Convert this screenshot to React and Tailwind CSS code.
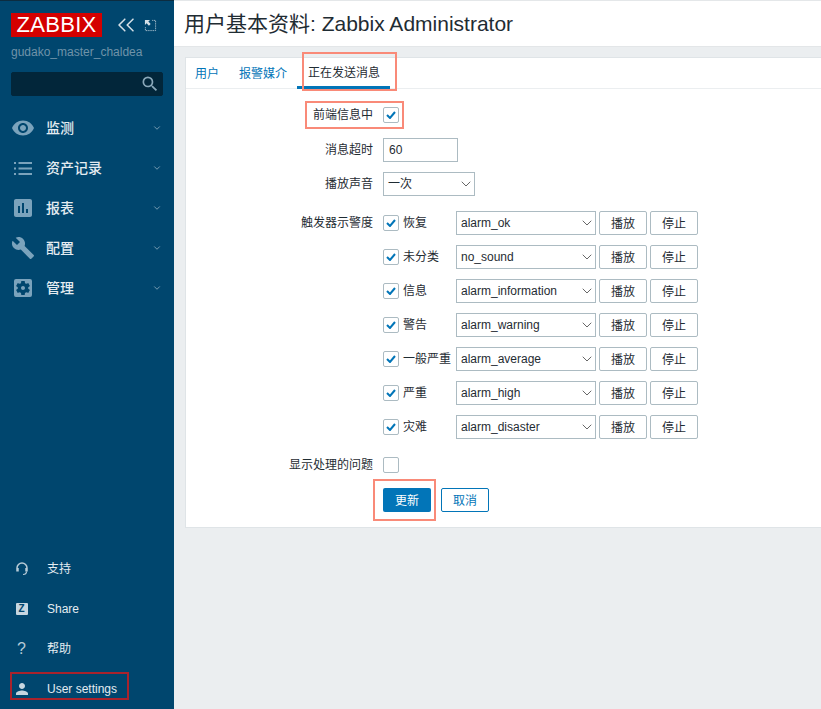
import React from "react";
import { ChevronDown, ChevronsLeft } from "lucide-react";
import {
  MdRemoveRedEye,
  MdAssessment,
  MdBuild,
  MdSettingsApplications,
  MdSearch,
  MdPerson,
} from "react-icons/md";

const FONT = { fontFamily: '"Liberation Sans", "Noto Sans CJK SC", sans-serif' };

const ListIcon = ({ size }) => (
  <svg width={size} height={size} viewBox="0 0 24 24" fill="currentColor">
    <path d="M3 6h2v2H3zM3 11.500h2v2H3zM3 17h2v2H3zM7.500 6H21v2H7.500zM7.500 11.500H21v2H7.500zM7.500 17H21v2H7.500z" />
  </svg>
);

const menu = [
  { label: "监测", Icon: MdRemoveRedEye },
  { label: "资产记录", Icon: ListIcon },
  { label: "报表", Icon: MdAssessment },
  { label: "配置", Icon: MdBuild },
  { label: "管理", Icon: MdSettingsApplications },
];

const severities = [
  { label: "恢复", sound: "alarm_ok" },
  { label: "未分类", sound: "no_sound" },
  { label: "信息", sound: "alarm_information" },
  { label: "警告", sound: "alarm_warning" },
  { label: "一般严重", sound: "alarm_average" },
  { label: "严重", sound: "alarm_high" },
  { label: "灾难", sound: "alarm_disaster" },
];

const Checkbox = ({ checked = true }) => (
  <span className="flex h-4 w-4 shrink-0 items-center justify-center rounded-[2px] border border-[#acbbc2] bg-white">
    {checked && (
      <svg width="10" height="8" viewBox="0 0 10 8" fill="none">
        <path d="M1 4l3 3 5-6" stroke="#0275b8" strokeWidth="2" />
      </svg>
    )}
  </span>
);

const Select = ({ value, className }) => (
  <div className={`flex h-6 items-center justify-between border border-[#acbbc2] bg-white pl-1 text-xs text-[#1f2c33] ${className}`}>
    <span>{value}</span>
    <ChevronDown size={16} strokeWidth={1.3} className="text-[#4f4f4f]" />
  </div>
);

const GreyButton = ({ children }) => (
  <button className="h-6 w-12 rounded-[2px] border border-[#acbbc2] bg-white pt-px text-xs text-[#1f2c33]">
    {children}
  </button>
);

const Highlight = ({ className }) => (
  <div className={`pointer-events-none absolute border-2 border-[#f98a78] ${className}`} />
);

const Sidebar = () => (
  <aside className="flex w-[174px] shrink-0 flex-col justify-between border-t border-[#0c2c40] bg-[#00466e] text-[#e4ecf1]">
    <div>
      <div className="flex items-center pl-[11px] pt-[12px]">
        <div className="flex h-6 w-[91px] items-center justify-center bg-[#d40000] text-[22px] leading-none tracking-[0.3px] text-white">
          ZABBIX
        </div>
        <ChevronsLeft size={28} strokeWidth={1.3} className="-my-1 ml-[10px] text-[#d5e0e7]" />
        <svg width="13" height="13" viewBox="0 0 14 14" className="ml-[4px]" fill="none">
          <path d="M1 1h5.500l-1.800 1.800 2.500 2.500-1.900 1.900-2.500-2.500L1 6.500z" fill="#d5e0e7" />
          <path d="M9 1.500h3.500v11h-11V9" stroke="#d5e0e7" strokeDasharray="1 1" />
        </svg>
      </div>
      <div className="pl-[11px] pt-[7px] text-xs text-[#6f93a9]">gudako_master_chaldea</div>
      <div className="mx-[11px] mt-[12px] flex h-6 items-center justify-end rounded-[2px] border border-[#02263a] bg-[#02263a] pr-0.5">
        <MdSearch size={20} className="text-[#8aa8ba]" />
      </div>
      <nav className="mt-[12px]">
        {menu.map(({ label, Icon }) => (
          <div key={label} className="flex h-10 items-center text-sm font-medium">
            <span className="flex w-[46px] justify-center text-[#7ba3bc]">
              <Icon size={24} />
            </span>
            <span className="flex-1">{label}</span>
            <ChevronDown size={10} strokeWidth={2} className="mr-[12px] text-[#8eacbf]" />
          </div>
        ))}
      </nav>
    </div>
    <div className="relative text-xs">
      <div className="flex h-10 items-center">
        <span className="flex w-[47px] justify-center pr-1 text-[#b7cbd7]">
          <svg width="12" height="14" viewBox="0 0 12 14" fill="none" stroke="currentColor">
            <path d="M1 6a5 5 0 0 1 10 0" strokeWidth="1.500" />
            <path d="M1.500 6v3.500M10.500 6v3.500" strokeWidth="2.500" />
            <path d="M10.500 9.500c0 1.800-1.500 3-3.500 3" strokeWidth="1.200" />
          </svg>
        </span>
        <span>支持</span>
      </div>
      <div className="flex h-10 items-center">
        <span className="flex w-[47px] justify-center pr-1">
          <span className="flex h-3 w-3 items-center justify-center rounded-[1px] bg-[#c6d6e0] text-[10px] font-bold leading-none text-[#00466e]">Z</span>
        </span>
        <span>Share</span>
      </div>
      <div className="flex h-10 items-center">
        <span className="flex w-[47px] justify-center pr-1 text-base leading-none text-[#b7cbd7]">?</span>
        <span>帮助</span>
      </div>
      <div className="flex h-10 items-center">
        <span className="flex w-[47px] justify-center pr-1 text-[#c6d6e0]">
          <MdPerson size={18} />
        </span>
        <span>User settings</span>
      </div>
      <div className="pointer-events-none absolute bottom-[9px] left-[10px] h-[28px] w-[119px] border-2 border-[#a9232c]" />
    </div>
  </aside>
);

export default function App() {
  return (
    <div className="flex min-h-[709px] w-full overflow-hidden bg-[#ebeef0]" style={FONT}>
      <Sidebar />
      <main className="relative flex min-w-0 flex-1 flex-col">
        <header className="flex h-[47px] items-center border-y border-t-[#e4e7e9] border-b-[#e3e6e8] bg-white pl-[10px] text-[21px] text-[#1f2c33]">
          用户基本资料: Zabbix Administrator
        </header>
        <section className="ml-[11px] mt-[10px] h-[471px] border border-r-0 border-[#dfe4e7] bg-white text-xs text-[#1f2c33]">
          <div className="flex h-[31px] border-b border-[#ebeef0] pl-[9px]">
            <span className="flex h-[31px] items-center pr-[20px] text-[#0275b8]">用户</span>
            <span className="flex h-[31px] items-center text-[#0275b8]">报警媒介</span>
            <span className="ml-[10px] flex h-[31px] items-center border-b-[3px] border-[#0275b8] pl-[11px] pr-[10px] pt-[2px]">正在发送消息</span>
          </div>
          <div className="grid grid-cols-[187px_1fr] items-center gap-x-[10px] pt-[18px]">
            <label className="text-right">前端信息中</label>
            <div><Checkbox /></div>

            <label className="mt-[15px] text-right">消息超时</label>
            <div className="mt-[15px]">
              <div className="flex h-6 w-[75px] items-center border border-[#acbbc2] pl-[5px]">60</div>
            </div>

            <label className="mt-[10px] text-right">播放声音</label>
            <div className="mt-[10px]">
              <Select value="一次" className="w-[92px]" />
            </div>

            <label className="mt-[15px] self-start pt-[4px] text-right">触发器示警度</label>
            <div className="mt-[15px] flex flex-col gap-[10px]">
              {severities.map((item) => (
                <div key={item.label} className="flex items-center">
                  <Checkbox />
                  <span className="ml-[4px] w-[53px]">{item.label}</span>
                  <Select value={item.sound} className="w-[140px]" />
                  <span className="ml-[3px] flex gap-[3px]">
                    <GreyButton>播放</GreyButton>
                    <GreyButton>停止</GreyButton>
                  </span>
                </div>
              ))}
            </div>

            <label className="mt-[18px] text-right">显示处理的问题</label>
            <div className="mt-[18px]"><Checkbox checked={false} /></div>

            <div />
            <div className="mt-[15px] flex gap-[10px]">
              <button className="h-6 w-12 rounded-[2px] bg-[#0275b8] pt-px text-xs text-white">更新</button>
              <button className="h-6 w-12 rounded-[2px] border border-[#0275b8] bg-white pt-px text-xs text-[#0275b8]">取消</button>
            </div>
          </div>
        </section>
        <Highlight className="left-[128px] top-[52px] h-[39px] w-[95px]" />
        <Highlight className="left-[131px] top-[101px] h-[28px] w-[99px]" />
        <Highlight className="left-[199px] top-[479px] h-[42px] w-[63px]" />
      </main>
    </div>
  );
}
